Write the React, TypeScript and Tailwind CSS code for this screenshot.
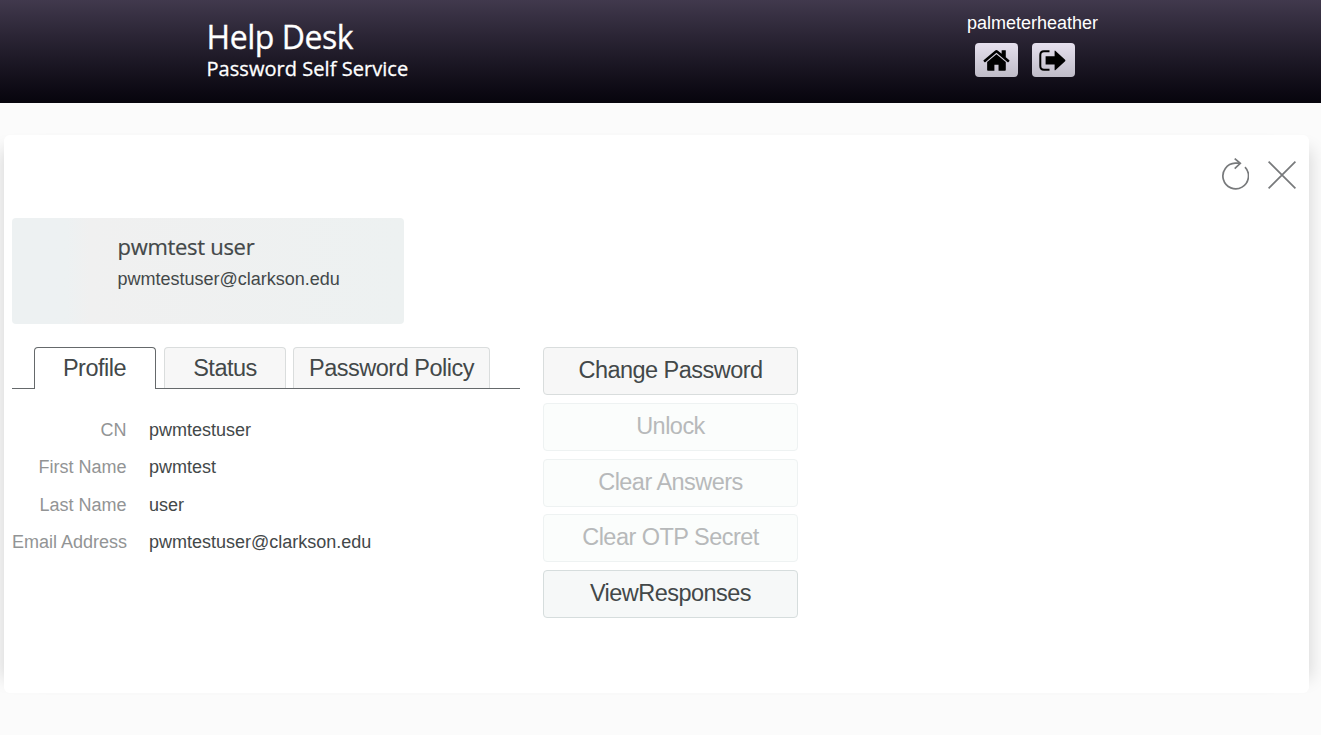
import { useState } from 'react'
import clsx from 'clsx'

const tabs = [
  { name: 'Profile', width: 'w-[122px]' },
  { name: 'Status', width: 'w-[122px]' },
  { name: 'Password Policy', width: 'w-[197px]' },
]

const details = [
  { label: 'CN', value: 'pwmtestuser' },
  { label: 'First Name', value: 'pwmtest' },
  { label: 'Last Name', value: 'user' },
  { label: 'Email Address', value: 'pwmtestuser@clarkson.edu' },
]

const actions = [
  { name: 'Change Password', disabled: false, style: 'bg-[#f7f7f7] border-[#d9dddd]' },
  { name: 'Unlock', disabled: true, style: '' },
  { name: 'Clear Answers', disabled: true, style: '' },
  { name: 'Clear OTP Secret', disabled: true, style: '' },
  { name: 'ViewResponses', disabled: false, style: 'bg-[#f6f8f8] border-[#d6dddd]' },
]

const HomeIcon = () => (
  <svg width="29" height="29" viewBox="0 0 1792 1792" fill="currentColor">
    <path d="M1408 992v480q0 26-19 45t-45 19h-384v-384h-256v384h-384q-26 0-45-19t-19-45v-480q0-1 .5-3t.5-3l575-474 575 474q1 2 1 6zm223-69l-62 74q-8 9-21 11h-3q-13 0-21-7l-692-577-692 577q-12 8-24 7-13-2-21-11l-62-74q-8-10-7-23.5t11-21.5l719-599q32-26 76-26t76 26l244 204v-195q0-14 9-23t23-9h192q14 0 23 9t9 23v408l219 182q10 8 11 21.5t-7 23.5z" />
  </svg>
)

const LogoutIcon = () => (
  <svg width="27" height="21" viewBox="0 0 27 21">
    <path d="M10.5 1.2H5Q1.3 1.2 1.3 5v11q0 3.8 3.7 3.8h5.5" fill="none" stroke="currentColor" strokeWidth="2" />
    <path d="M6.6 6.3h9V.9q0-.6.7-.2l9.8 9q.7.8 0 1.5l-9.8 9q-.7.4-.7-.3v-5.4h-9z" fill="currentColor" />
  </svg>
)

const Header = () => (
  <header className="flex h-[103px] justify-between bg-linear-to-b from-[#41394d] to-[#07050d] pl-[206.5px] pr-[223px] text-white">
    <div className="pt-4 font-['Open_Sans',sans-serif] [-webkit-text-stroke:0.3px_white]">
      <h1 className="text-[32px] leading-[42px] tracking-[-0.45px]">Help Desk</h1>
      <p className="text-xl leading-[22px] tracking-[0.05px]">Password Self Service</p>
    </div>
    <div className="pt-[11px] text-lg leading-6">
      <p>palmeterheather</p>
      <div className="flex gap-[14px] pl-2 pt-2 text-black">
        <button aria-label="Home" className="flex h-[34px] w-[43px] items-center justify-center rounded bg-linear-to-b from-[#e6e0ee] to-[#bfbcc8] pl-[3px]">
          <HomeIcon />
        </button>
        <button aria-label="Logout" className="flex h-[34px] w-[43px] items-center justify-center rounded bg-linear-to-b from-[#e6e0ee] to-[#bfbcc8] pr-px">
          <LogoutIcon />
        </button>
      </div>
    </div>
  </header>
)

export default function App() {
  const [active, setActive] = useState('Profile')

  return (
    <div className="h-[735px] overflow-hidden bg-[#fbfbfb] font-['Liberation_Sans',Arial,sans-serif] text-[#434849]">
      <Header />
      <main className="ml-1 mr-3 mt-8 h-[558px] rounded-md bg-white px-2 shadow-[16px_0_16px_-14px_rgba(0,0,0,0.14),-16px_0_16px_-14px_rgba(0,0,0,0.14)]">
        <div className="flex h-[83px] justify-end gap-[19px] pr-[5px] pt-[23px] text-[#77797b]">
          <button aria-label="Refresh" className="h-8 w-7">
            <svg width="28" height="32" viewBox="0 0 28 32" fill="none" stroke="currentColor" strokeWidth="1.7">
              <path d="M24 9.2A12.8 12.8 0 1 1 14.2 5.2H19" />
              <path d="M13.7.6l5.6 4.8-5.6 5.2" />
            </svg>
          </button>
          <button aria-label="Close" className="h-8 w-7">
            <svg width="28" height="32" viewBox="0 0 28 32" fill="none" stroke="currentColor" strokeWidth="1.7">
              <path d="M.6 3.6l26.8 26.8M27.4 3.6L.6 30.4" />
            </svg>
          </button>
        </div>

        <section className="h-[106px] w-[392px] rounded bg-linear-to-r from-[#edf1f2] from-14% via-[#f0f0f0] via-20% to-[#edf1f1] pl-[105.5px] pt-[13px]">
          <h2 className="font-['Open_Sans',sans-serif] text-[22px] leading-[30px] tracking-[-0.3px] [-webkit-text-stroke:0.2px_#434849]">pwmtest user</h2>
          <p className="pt-1.5 text-lg leading-6">pwmtestuser@clarkson.edu</p>
        </section>

        <div className="mt-[23px] flex gap-[23px]">
          <section className="w-[508px]">
            <div className="flex h-[42px] text-[23.5px] tracking-[-0.5px]">
              <div className="w-[22px] border-b border-[#65696b]" />
              {tabs.map((tab, i) => (
                <div key={tab.name} className="flex">
                  {i > 0 && <div className={clsx('border-b border-[#65696b]', i === 1 ? 'w-2' : 'w-[7px]')} />}
                  <div className={clsx(tab.width, active !== tab.name && 'border-b border-[#65696b]')}>
                    <button
                      onClick={() => setActive(tab.name)}
                      className={clsx(
                        'h-full w-full rounded-t border border-b-0',
                        active === tab.name ? 'border-[#65696b] bg-white pr-px' : 'border-[#dadddd] bg-[#f7f7f7] pt-px'
                      )}
                    >
                      {tab.name}
                    </button>
                  </div>
                </div>
              ))}
              <div className="flex-1 border-b border-[#65696b]" />
            </div>
            <dl className="pt-[23px] text-lg leading-[37.4px]">
              {details.map((row) => (
                <div key={row.label} className="flex gap-[22.5px]">
                  <dt className="w-[114.5px] whitespace-nowrap text-right text-[#929495]">{row.label}</dt>
                  <dd>{row.value}</dd>
                </div>
              ))}
            </dl>
          </section>

          <section className="flex w-[255px] flex-col gap-[7.75px]">
            {actions.map((action) => (
              <button
                key={action.name}
                disabled={action.disabled}
                className={clsx(
                  'h-12 rounded border pb-[0.5px] text-[23.5px] tracking-[-0.53px]',
                  action.disabled ? 'border-[#eef2f2] bg-[#fbfdfc] text-[#b7b9ba]' : action.style
                )}
              >
                {action.name}
              </button>
            ))}
          </section>
        </div>
      </main>
    </div>
  )
}
